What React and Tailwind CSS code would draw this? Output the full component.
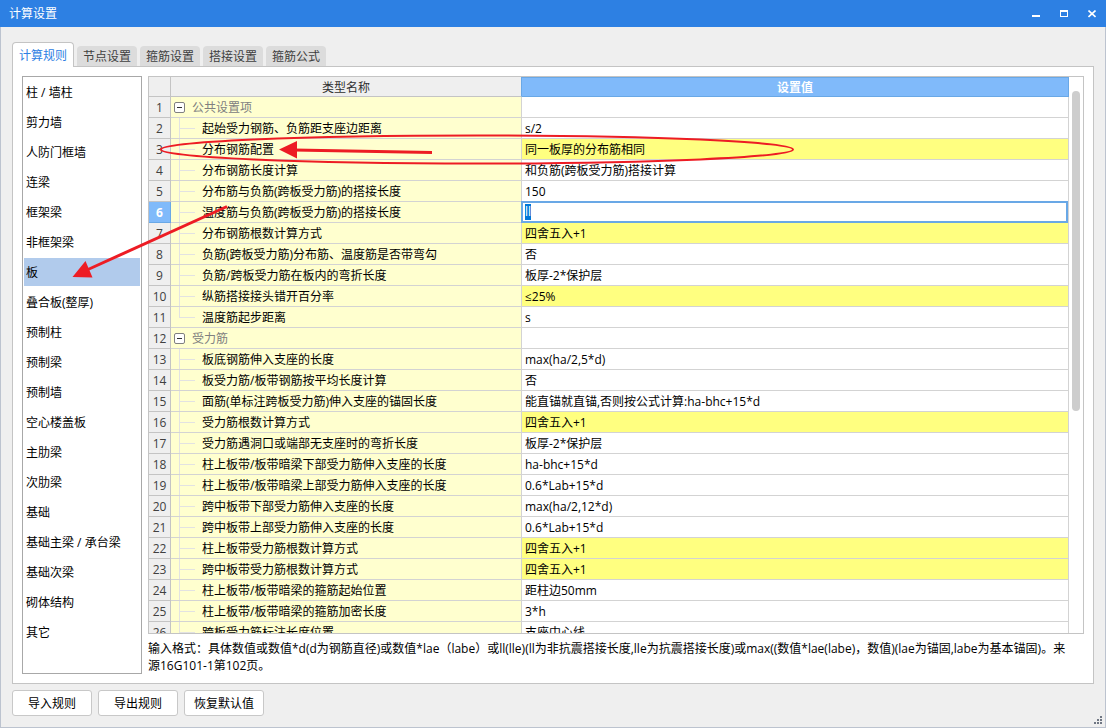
import { useEffect, useRef } from "react";

const TABS = ["计算规则", "节点设置", "箍筋设置", "搭接设置", "箍筋公式"];

const MEMBERS = [
  "柱 / 墙柱", "剪力墙", "人防门框墙", "连梁", "框架梁", "非框架梁", "板",
  "叠合板(整厚)", "预制柱", "预制梁", "预制墙", "空心楼盖板", "主肋梁", "次肋梁",
  "基础", "基础主梁 / 承台梁", "基础次梁", "砌体结构", "其它",
];

const ROWS = [
  { group: true, name: "公共设置项" },
  { name: "起始受力钢筋、负筋距支座边距离", value: "s/2" },
  { name: "分布钢筋配置", value: "同一板厚的分布筋相同", mark: true },
  { name: "分布钢筋长度计算", value: "和负筋(跨板受力筋)搭接计算" },
  { name: "分布筋与负筋(跨板受力筋)的搭接长度", value: "150" },
  { name: "温度筋与负筋(跨板受力筋)的搭接长度", value: "ll", editing: true },
  { name: "分布钢筋根数计算方式", value: "四舍五入+1", mark: true },
  { name: "负筋(跨板受力筋)分布筋、温度筋是否带弯勾", value: "否" },
  { name: "负筋/跨板受力筋在板内的弯折长度", value: "板厚-2*保护层" },
  { name: "纵筋搭接接头错开百分率", value: "≤25%", mark: true },
  { name: "温度筋起步距离", value: "s", last: true },
  { group: true, name: "受力筋" },
  { name: "板底钢筋伸入支座的长度", value: "max(ha/2,5*d)" },
  { name: "板受力筋/板带钢筋按平均长度计算", value: "否" },
  { name: "面筋(单标注跨板受力筋)伸入支座的锚固长度", value: "能直锚就直锚,否则按公式计算:ha-bhc+15*d" },
  { name: "受力筋根数计算方式", value: "四舍五入+1", mark: true },
  { name: "受力筋遇洞口或端部无支座时的弯折长度", value: "板厚-2*保护层" },
  { name: "柱上板带/板带暗梁下部受力筋伸入支座的长度", value: "ha-bhc+15*d" },
  { name: "柱上板带/板带暗梁上部受力筋伸入支座的长度", value: "0.6*Lab+15*d" },
  { name: "跨中板带下部受力筋伸入支座的长度", value: "max(ha/2,12*d)" },
  { name: "跨中板带上部受力筋伸入支座的长度", value: "0.6*Lab+15*d" },
  { name: "柱上板带受力筋根数计算方式", value: "四舍五入+1", mark: true },
  { name: "跨中板带受力筋根数计算方式", value: "四舍五入+1", mark: true },
  { name: "柱上板带/板带暗梁的箍筋起始位置", value: "距柱边50mm" },
  { name: "柱上板带/板带暗梁的箍筋加密长度", value: "3*h" },
  { name: "跨板受力筋标注长度位置", value: "支座中心线" },
];

function TitleBar() {
  return (
    <header className="flex h-[27px] shrink-0 items-center justify-between bg-[#2d80e3] pl-[9px] text-white">
      <h1>计算设置</h1>
      <div className="flex">
        <button type="button" aria-label="最小化" className="flex h-6 w-7 items-center justify-center">
          <svg width="8" height="8" viewBox="0 0 8 8" shapeRendering="crispEdges"><rect y="5" width="8" height="2" fill="#fff" /></svg>
        </button>
        <button type="button" aria-label="最大化" className="flex h-6 w-7 items-center justify-center">
          <svg width="8" height="8" viewBox="0 0 8 8" shapeRendering="crispEdges"><path d="M0 0h8v7H0zM1 2v4h6V2z" fill="#fff" fillRule="evenodd" /></svg>
        </button>
        <button type="button" aria-label="关闭" className="flex h-6 w-7 items-center justify-center">
          <svg width="8" height="8" viewBox="0 0 8 8"><path d="M0.5 0.5l7 6.5M7.5 0.5l-7 6.5" stroke="#fff" strokeWidth="1.6" /></svg>
        </button>
      </div>
    </header>
  );
}

function Branch({ last }) {
  return (
    <span className="ml-2 mr-[7px] flex h-full w-4 shrink-0 flex-col">
      <span className="h-[11px] border-b border-l border-[#e2e2e2]" />
      {!last && <span className="flex-1 border-l border-[#e2e2e2]" />}
    </span>
  );
}

function ValueEditor({ label, value }) {
  const ref = useRef(null);
  useEffect(() => {
    ref.current.focus({ preventScroll: true });
    ref.current.select();
  }, []);
  return (
    <input
      ref={ref}
      aria-label={label}
      defaultValue={value}
      className="absolute -bottom-px -left-px -top-px right-0 border-2 border-[#69a8e6] bg-white pl-0.5 outline-none selection:bg-[#0078d7] selection:text-white"
    />
  );
}

function SettingRow({ row, index }) {
  return (
    <tr className="h-[21px]">
      <th
        scope="row"
        className={
          row.editing
            ? "border-b border-r border-[#69a8e6] bg-[#80bafa] p-0 pt-0.5 font-bold text-white"
            : "border-b border-r border-[#c4c4c4] bg-[#efefef] p-0 pt-0.5 font-normal text-[#404040]"
        }
      >
        {index + 1}
      </th>
      <td className="border-b border-r border-[#d3d3d3] bg-[#ffffcf] p-0">
        <div className="flex h-5 items-center overflow-hidden whitespace-nowrap">
          {row.group ? (
            <>
              <button type="button" aria-label={"折叠" + row.name} className="ml-[3px] mr-[7px] shrink-0">
                <svg width="11" height="11" viewBox="0 0 11 11" className="block">
                  <rect x="0.5" y="0.5" width="10" height="10" rx="1.5" fill="#fff" stroke="#808080" />
                  <path d="M3 5.5h5" stroke="#303030" />
                </svg>
              </button>
              <span className="pt-0.5 text-[#808080]">{row.name}</span>
            </>
          ) : (
            <>
              <Branch last={row.last} />
              <span className="pt-0.5">{row.name}</span>
            </>
          )}
        </div>
      </td>
      <td className={"relative border-b border-r border-[#d3d3d3] pb-0 pl-[3px] pr-0 pt-0.5 " + (row.mark ? "bg-[#ffff80]" : "bg-white")}>
        {row.editing ? <ValueEditor label={row.name} value={row.value} /> : row.value}
      </td>
    </tr>
  );
}

function SettingsTable() {
  return (
    <div className="flex min-h-0 flex-1 border border-[#c4c4c4] bg-white">
      <div className="min-w-0 flex-1 overflow-y-auto [scrollbar-width:none]">
        <table className="w-full table-fixed border-separate border-spacing-0 leading-4">
          <colgroup>
            <col className="w-[22px]" />
            <col className="w-[351px]" />
            <col />
          </colgroup>
          <thead>
            <tr className="h-5">
              <td className="border-b border-r border-[#c4c4c4] bg-[#efefef] p-0" />
              <th scope="col" className="border-b border-r border-b-[#c4c4c4] border-r-[#69a8e6] bg-[#efefef] p-0 pt-0.5 font-normal text-[#303030]">类型名称</th>
              <th scope="col" className="border-b border-r border-t border-[#69a8e6] bg-[#80bafa] p-0 pt-0.5 font-bold text-white">设置值</th>
            </tr>
          </thead>
          <tbody>
            {ROWS.map((row, i) => <SettingRow key={i} row={row} index={i} />)}
          </tbody>
        </table>
      </div>
      <div className="flex w-3.5 shrink-0 flex-col pl-[3px] pt-3.5">
        <div className="h-80 w-2 rounded-full bg-[#cdcdcd]" />
      </div>
    </div>
  );
}

function Annotations() {
  return (
    <svg className="pointer-events-none absolute left-0 top-0" width="800" height="290" viewBox="0 0 800 290" aria-hidden="true">
      <g fill="none" stroke="#ed1c24">
        <ellipse cx="477" cy="149.5" rx="316" ry="14" strokeWidth="2" />
        <path d="M432 152.5L294 150" strokeWidth="3" />
        <path d="M227 206.5L88 269.5" strokeWidth="3" />
      </g>
      <path d="M279 149.5L297 141V158.5ZM72.5 277L85.5 261L92.5 277.5Z" fill="#ed1c24" />
    </svg>
  );
}

export default function App() {
  return (
    <div className="relative flex h-screen flex-col overflow-hidden bg-[#efefef] font-['Open_Sans','Noto_Sans_CJK_SC',sans-serif] text-xs leading-[17px] text-black">
      <TitleBar />
      <div className="flex min-h-0 flex-1 flex-col border-x border-b border-[#bcc3cf] pb-[11px] pl-[11px] pr-[11px] pt-[15px]">
        <div role="tablist" className="z-10 -mb-px flex items-end gap-[3px]">
          {TABS.map((tab, i) => (
            <button
              key={tab}
              type="button"
              role="tab"
              aria-selected={i === 0}
              className={
                i === 0
                  ? "h-[25px] w-[62px] rounded-t border border-b-0 border-[#c4c4c4] bg-white text-[#2d80e3]"
                  : "mb-px h-5 w-[60px] rounded-t bg-[#dcdcdc] text-[#404040]"
              }
            >
              {tab}
            </button>
          ))}
        </div>
        <main className="flex min-h-0 flex-1 gap-1.5 border border-[#c4c4c4] bg-white p-[9px]">
          <ul className="flex w-[120px] shrink-0 flex-col gap-0.5 border border-[#a8a8a8] p-px">
            {MEMBERS.map((m) => (
              <li key={m}>
                <button
                  type="button"
                  className={"flex h-7 w-full items-center whitespace-nowrap pl-0.5 text-left " + (m === "板" ? "bg-[#b1cbec]" : "bg-white")}
                >
                  {m}
                </button>
              </li>
            ))}
          </ul>
          <div className="flex min-w-0 flex-1 flex-col">
            <SettingsTable />
            <p className="h-10 shrink-0 pr-2 pt-1.5">
              输入格式：具体数值或数值*d(d为钢筋直径)或数值*lae（labe）或ll(lle)(ll为非抗震搭接长度,lle为抗震搭接长度)或max((数值*lae(labe)，数值)(lae为锚固,labe为基本锚固)。来源16G101-1第102页。
            </p>
          </div>
        </main>
        <footer className="mt-1.5 flex gap-1.5">
          {["导入规则", "导出规则", "恢复默认值"].map((b) => (
            <button key={b} type="button" className="h-[26px] w-20 rounded-[3px] border border-[#c8c8c8] bg-white">{b}</button>
          ))}
        </footer>
      </div>
      <svg className="absolute bottom-1 right-1" width="8" height="8" viewBox="0 0 8 8" shapeRendering="crispEdges" aria-hidden="true">
        <path d="M6 0h2v2H6zM3 3h2v2H3zM6 3h2v2H6zM0 6h2v2H0zM3 6h2v2H3zM6 6h2v2H6z" fill="#707784" />
      </svg>
      <Annotations />
    </div>
  );
}
